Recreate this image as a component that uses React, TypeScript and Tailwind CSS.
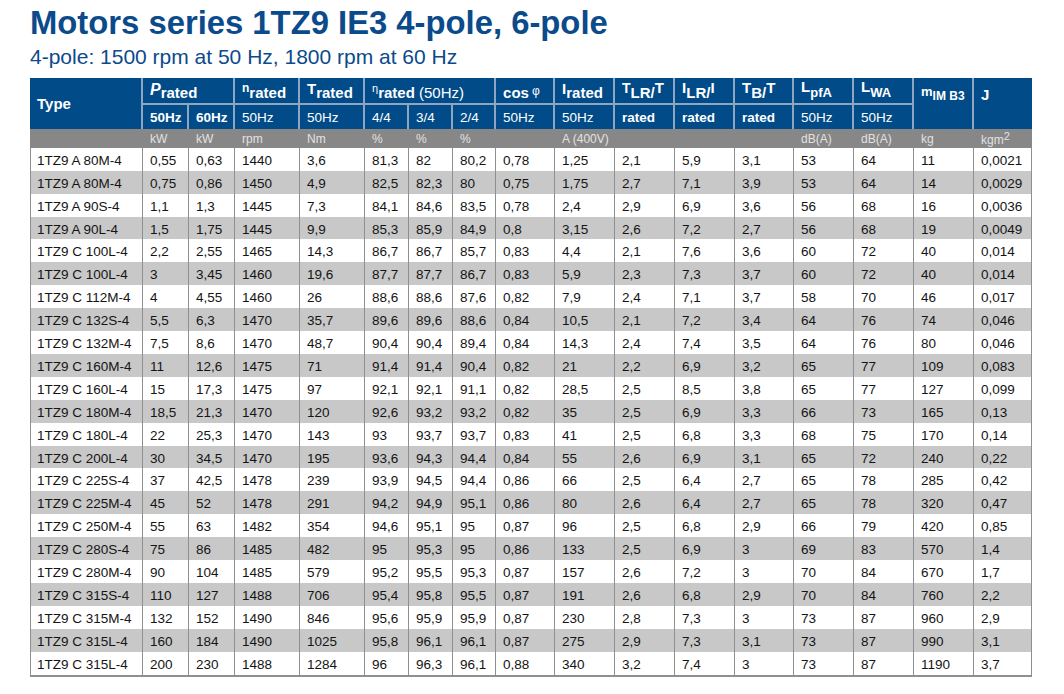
import { Fragment } from 'react'

const COLS = [113, 46, 46, 65, 65, 44, 44, 43, 59, 60, 60, 60, 59, 60, 60, 60, 58]

const ROWS: string[][] = [
  ['1TZ9 A 80M-4', '0,55', '0,63', '1440', '3,6', '81,3', '82', '80,2', '0,78', '1,25', '2,1', '5,9', '3,1', '53', '64', '11', '0,0021'],
  ['1TZ9 A 80M-4', '0,75', '0,86', '1450', '4,9', '82,5', '82,3', '80', '0,75', '1,75', '2,7', '7,1', '3,9', '53', '64', '14', '0,0029'],
  ['1TZ9 A 90S-4', '1,1', '1,3', '1445', '7,3', '84,1', '84,6', '83,5', '0,78', '2,4', '2,9', '6,9', '3,6', '56', '68', '16', '0,0036'],
  ['1TZ9 A 90L-4', '1,5', '1,75', '1445', '9,9', '85,3', '85,9', '84,9', '0,8', '3,15', '2,6', '7,2', '2,7', '56', '68', '19', '0,0049'],
  ['1TZ9 C 100L-4', '2,2', '2,55', '1465', '14,3', '86,7', '86,7', '85,7', '0,83', '4,4', '2,1', '7,6', '3,6', '60', '72', '40', '0,014'],
  ['1TZ9 C 100L-4', '3', '3,45', '1460', '19,6', '87,7', '87,7', '86,7', '0,83', '5,9', '2,3', '7,3', '3,7', '60', '72', '40', '0,014'],
  ['1TZ9 C 112M-4', '4', '4,55', '1460', '26', '88,6', '88,6', '87,6', '0,82', '7,9', '2,4', '7,1', '3,7', '58', '70', '46', '0,017'],
  ['1TZ9 C 132S-4', '5,5', '6,3', '1470', '35,7', '89,6', '89,6', '88,6', '0,84', '10,5', '2,1', '7,2', '3,4', '64', '76', '74', '0,046'],
  ['1TZ9 C 132M-4', '7,5', '8,6', '1470', '48,7', '90,4', '90,4', '89,4', '0,84', '14,3', '2,4', '7,4', '3,5', '64', '76', '80', '0,046'],
  ['1TZ9 C 160M-4', '11', '12,6', '1475', '71', '91,4', '91,4', '90,4', '0,82', '21', '2,2', '6,9', '3,2', '65', '77', '109', '0,083'],
  ['1TZ9 C 160L-4', '15', '17,3', '1475', '97', '92,1', '92,1', '91,1', '0,82', '28,5', '2,5', '8,5', '3,8', '65', '77', '127', '0,099'],
  ['1TZ9 C 180M-4', '18,5', '21,3', '1470', '120', '92,6', '93,2', '93,2', '0,82', '35', '2,5', '6,9', '3,3', '66', '73', '165', '0,13'],
  ['1TZ9 C 180L-4', '22', '25,3', '1470', '143', '93', '93,7', '93,7', '0,83', '41', '2,5', '6,8', '3,3', '68', '75', '170', '0,14'],
  ['1TZ9 C 200L-4', '30', '34,5', '1470', '195', '93,6', '94,3', '94,4', '0,84', '55', '2,6', '6,9', '3,1', '65', '72', '240', '0,22'],
  ['1TZ9 C 225S-4', '37', '42,5', '1478', '239', '93,9', '94,5', '94,4', '0,86', '66', '2,5', '6,4', '2,7', '65', '78', '285', '0,42'],
  ['1TZ9 C 225M-4', '45', '52', '1478', '291', '94,2', '94,9', '95,1', '0,86', '80', '2,6', '6,4', '2,7', '65', '78', '320', '0,47'],
  ['1TZ9 C 250M-4', '55', '63', '1482', '354', '94,6', '95,1', '95', '0,87', '96', '2,5', '6,8', '2,9', '66', '79', '420', '0,85'],
  ['1TZ9 C 280S-4', '75', '86', '1485', '482', '95', '95,3', '95', '0,86', '133', '2,5', '6,9', '3', '69', '83', '570', '1,4'],
  ['1TZ9 C 280M-4', '90', '104', '1485', '579', '95,2', '95,5', '95,3', '0,87', '157', '2,6', '7,2', '3', '70', '84', '670', '1,7'],
  ['1TZ9 C 315S-4', '110', '127', '1488', '706', '95,4', '95,8', '95,5', '0,87', '191', '2,6', '6,8', '2,9', '70', '84', '760', '2,2'],
  ['1TZ9 C 315M-4', '132', '152', '1490', '846', '95,6', '95,9', '95,9', '0,87', '230', '2,8', '7,3', '3', '73', '87', '960', '2,9'],
  ['1TZ9 C 315L-4', '160', '184', '1490', '1025', '95,8', '96,1', '96,1', '0,87', '275', '2,9', '7,3', '3,1', '73', '87', '990', '3,1'],
  ['1TZ9 C 315L-4', '200', '230', '1488', '1284', '96', '96,3', '96,1', '0,88', '340', '3,2', '7,4', '3', '73', '87', '1190', '3,7'],
]

// second header row: label + bold flag
const SUB: [string, boolean][] = [
  ['50Hz', true], ['60Hz', true], ['50Hz', false], ['50Hz', false],
  ['4/4', false], ['3/4', false], ['2/4', false], ['50Hz', false], ['50Hz', false],
  ['rated', true], ['rated', true], ['rated', true], ['50Hz', false], ['50Hz', false],
]

const UNITS = ['', 'kW', 'kW', 'rpm', 'Nm', '%', '%', '%', '', 'A (400V)', '', '', '', 'dB(A)', 'dB(A)', 'kg']

const top = 'h-[27px] align-bottom pb-[1px] pl-[7px] text-left text-[15px] leading-[18px] font-bold text-white whitespace-nowrap border-r-2 border-b-2 border-[#8ea6c2]'
const sub = 'h-[24px] align-middle pt-[2px] pl-[7px] text-left text-[13.5px] leading-[16px] text-white whitespace-nowrap border-r-2 border-[#8ea6c2]'
const unit = 'h-[19px] align-middle pt-[2px] pl-[7px] text-left text-[12px] leading-[14px] text-[#e2e2e2] whitespace-nowrap font-normal'

export default function App() {
  return (
    <div className="min-h-screen bg-white pl-[30px] font-['Liberation_Sans',Arial,Helvetica,sans-serif]">
      <h1 className="pt-[7px] text-[32.8px] leading-none font-bold text-[#0b4a8b]">
        Motors series 1TZ9 IE3 4-pole, 6-pole
      </h1>
      <p className="mt-[6px] text-[21px] leading-none text-[#0b4a8b]">
        4-pole: 1500 rpm at 50 Hz, 1800 rpm at 60 Hz
      </p>

      <table className="mt-[11px] w-[1002px] table-fixed border-separate border-spacing-0">
        <colgroup>
          {COLS.map((w, i) => (
            <col key={i} style={{ width: w }} />
          ))}
        </colgroup>
        <thead className="bg-[#004b88]">
          <tr>
            <th rowSpan={2} className="align-middle pt-[2px] pl-[7px] text-left text-[15px] font-bold text-white border-r-2 border-[#8ea6c2]">
              Type
            </th>
            <th colSpan={2} className={top}>
              <span className="align-[3px] text-[16px] leading-none italic">P</span>rated
            </th>
            <th className={top}>
              <span className="align-[6px] text-[12px] leading-none">n</span>rated
            </th>
            <th className={top}>
              <span className="align-[4px] text-[15px] leading-none">T</span>rated
            </th>
            <th colSpan={3} className={top}>
              <span className="align-[6px] text-[11px] leading-none font-normal">η</span>rated
              <span className="font-normal"> (50Hz)</span>
            </th>
            <th className={top}>
              cos<span className="ml-[3px] align-[3px] text-[12px] leading-none font-normal">φ</span>
            </th>
            <th className={top}>
              <span className="align-[4px] text-[15px] leading-none">I</span>rated
            </th>
            <th className={top}>
              <span className="align-[5px] text-[14px] leading-none">T</span>LR/
              <span className="align-[5px] text-[15px] leading-none">T</span>
            </th>
            <th className={top}>
              <span className="align-[5px] text-[15px] leading-none">I</span>LR/
              <span className="align-[5px] text-[15px] leading-none">I</span>
            </th>
            <th className={top}>
              <span className="align-[5px] text-[15px] leading-none">T</span>B/
              <span className="align-[5px] text-[15px] leading-none">T</span>
            </th>
            <th className={top}>
              <span className="align-[5px] text-[15px] leading-none">L</span>
              <span className="text-[13px]">pfA</span>
            </th>
            <th className={top}>
              <span className="align-[5px] text-[15px] leading-none">L</span>
              <span className="text-[13px]">WA</span>
            </th>
            <th rowSpan={2} className="align-top pt-[7px] pl-[7px] text-left text-[15px] leading-[18px] font-bold text-white whitespace-nowrap border-r-2 border-[#8ea6c2]">
              <span className="align-[4px] text-[13px] leading-none">m</span>
              <span className="text-[12px]">IM B3</span>
            </th>
            <th rowSpan={2} className="align-top pt-[8px] pl-[7px] text-left text-[15px] leading-[18px] font-bold text-white">
              J
            </th>
          </tr>
          <tr>
            {SUB.map(([label, bold], i) => (
              <th key={i} className={`${sub} ${bold ? 'font-bold' : 'font-normal'}`}>
                {label}
              </th>
            ))}
          </tr>
          <tr className="bg-[#878787]">
            {UNITS.map((u, i) => (
              <th key={i} className={unit}>
                {u}
              </th>
            ))}
            <th className={unit}>
              kgm<span className="align-[4px] text-[11px] leading-none">2</span>
            </th>
          </tr>
        </thead>
        <tbody>
          {ROWS.map((row, r) => (
            <tr key={r} className={r % 2 === 1 ? 'bg-[#c8c8c8]' : 'bg-white'}>
              {row.map((v, c) => (
                <Fragment key={c}>
                  <td
                    className={`align-middle pt-[5px] pb-[2px] text-[13.5px] leading-[15.9px] text-[#141414] whitespace-nowrap border-r border-[#8f8f8f] ${
                      c === 0 ? 'border-l pl-[6px]' : 'pl-[7px]'
                    } ${r === ROWS.length - 1 ? 'border-b-2' : ''}`}
                  >
                    {v}
                  </td>
                </Fragment>
              ))}
            </tr>
          ))}
        </tbody>
      </table>
    </div>
  )
}
